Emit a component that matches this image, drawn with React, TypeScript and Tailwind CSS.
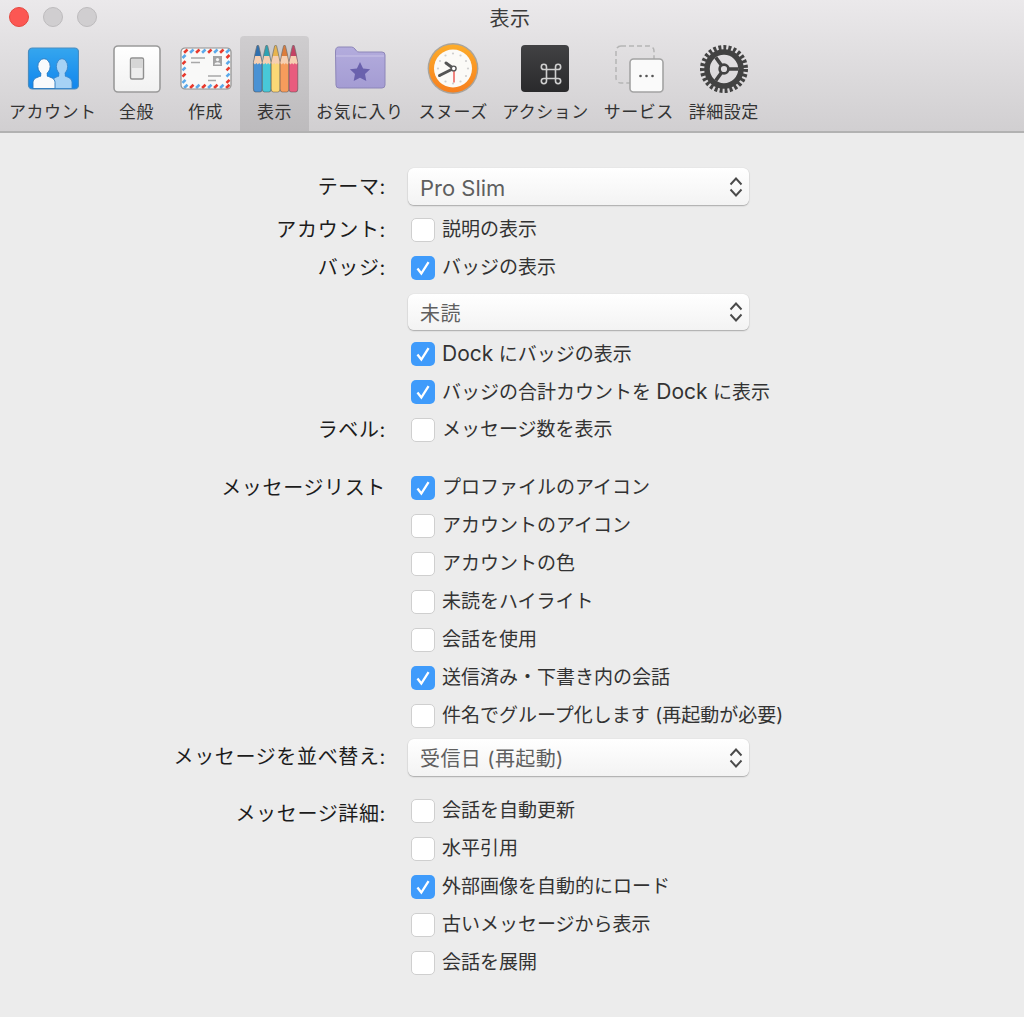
import React from "react";

const FONT = "[font-family:Inter,'Noto_Sans_CJK_JP',sans-serif]";

function AccountIcon() {
  const person = (cx: number, w: number, fill: string, stroke: string) => (
    <g fill={fill} stroke={stroke} strokeWidth="0.9">
      <path d={`M${cx - w} 45.5 v-6 c0-4 ${w * 0.35}-5 ${w - 3}-6.5 v-3 h6 v3 c${w * 0.65 - 3} 1.5 ${w - 3} 2.5 ${w - 3} 6.5 v6 z`} />
      <ellipse cx={cx} cy="23.5" rx={w * 0.56} ry="7.8" />
      <path d={`M${cx - 2.6} 30 h5.2 v3.4 h-5.2 z`} stroke="none" />
    </g>
  );
  return (
    <svg width="52" height="52" viewBox="0 0 52 52">
      <defs>
        <linearGradient id="acc" x1="0" y1="0" x2="0" y2="1">
          <stop offset="0" stopColor="#35a6ee" />
          <stop offset="1" stopColor="#1186ee" />
        </linearGradient>
      </defs>
      <rect x="1.5" y="5" width="50" height="41" rx="4" fill="url(#acc)" stroke="#4a8dbf" strokeWidth="1.2" />
      {person(35, 10, "#a6d2f5", "#3a86c8")}
      {person(17, 11, "#f8fafc", "#2a78bd")}
    </svg>
  );
}

function GeneralIcon() {
  return (
    <svg width="52" height="52" viewBox="0 0 52 52">
      <defs>
        <linearGradient id="gen" x1="0" y1="0" x2="0" y2="1">
          <stop offset="0" stopColor="#ffffff" />
          <stop offset="1" stopColor="#f1f1f1" />
        </linearGradient>
      </defs>
      <rect x="3" y="3" width="46" height="46" rx="4" fill="url(#gen)" stroke="#9a9a9a" strokeWidth="1.6" />
      <rect x="19.5" y="15" width="13" height="21" rx="1.5" fill="#ededed" stroke="#8f8f8f" strokeWidth="1.4" />
      <rect x="20.5" y="16" width="11" height="9" fill="#d6d6d6" />
    </svg>
  );
}

function ComposeIcon() {
  const stripes = [];
  for (let i = 0; i < 8; i++) {
    const x = 3.5 + i * 6;
    const c = i % 2 ? "#5ba9ea" : "#e8392c";
    const c2 = i % 2 ? "#e8392c" : "#5ba9ea";
    stripes.push(<path key={`t${i}`} d={`M${x + 4} 6.5 l-3.4 3.2`} stroke={c} strokeWidth="2.6" />);
    stripes.push(<path key={`b${i}`} d={`M${x + 4} 41.8 l-3.4 3.2`} stroke={c2} strokeWidth="2.6" />);
  }
  for (let i = 0; i < 5; i++) {
    const y = 11 + i * 6.2;
    stripes.push(<path key={`l${i}`} d={`M5.5 ${y + 1} l-3 3`} stroke={i % 2 ? "#e8392c" : "#5ba9ea"} strokeWidth="2.6" />);
    stripes.push(<path key={`r${i}`} d={`M49.5 ${y + 1} l-3 3`} stroke={i % 2 ? "#5ba9ea" : "#e8392c"} strokeWidth="2.6" />);
  }
  return (
    <svg width="52" height="52" viewBox="0 0 52 52">
      <rect x="1" y="5" width="50" height="41" rx="4" fill="#f9f9f8" />
      {stripes}
      <rect x="1" y="5" width="50" height="41" rx="4" fill="none" stroke="#8f8f8f" strokeWidth="1.2" />
      <path d="M11 15 h14 M11 19.5 h9 M28 33 h13 M28 37.5 h8" stroke="#a8a8a8" strokeWidth="1.5" />
      <rect x="33" y="13" width="9" height="10" fill="#a3a3a3" />
      <circle cx="37.5" cy="16.6" r="1.6" fill="#f4f4f4" />
      <path d="M34.5 21.5 c0-3 6-3 6 0 z" fill="#f4f4f4" />
    </svg>
  );
}

function PencilsIcon() {
  const cols = [
    ["#4a92d4", "#2f6fae"],
    ["#48c8d8", "#2ea2b2"],
    ["#fbd876", "#e8b44e"],
    ["#f69c5c", "#dc7c3c"],
    ["#e85c7e", "#c44264"],
  ];
  return (
    <svg width="52" height="52" viewBox="0 0 52 52">
      {cols.map(([c, d], i) => {
        const x = 4.4 + i * 8.9;
        return (
          <g key={i}>
            <path d={`M${x} 20 Q${x + 1.5} 10 ${x + 3.4} 3 q1 -2 2 0 Q${x + 7.3} 10 ${x + 8.8} 20 V46 q0 3 -2 3 h-4.8 q-2 0 -2 -3 Z`} fill={d} stroke="#6e6e6e" strokeWidth="0.7" />
            <path d={`M${x + 0.6} 20 V46 q0 2.4 1.6 2.4 h4.4 q1.6 0 1.6 -2.4 V20 Z`} fill={c} />
            <path d={`M${x + 0.2} 20 L${x + 1.8} 13 h5.2 L${x + 8.6} 20 l-1.4 1.5 l-1.4 -1.5 l-1.4 1.5 l-1.4 -1.5 l-1.4 1.5 Z`} fill="#f6cfb2" />
          </g>
        );
      })}
    </svg>
  );
}

function FolderIcon() {
  return (
    <svg width="52" height="52" viewBox="0 0 52 52">
      <defs>
        <linearGradient id="fol" x1="0" y1="0" x2="0" y2="1">
          <stop offset="0" stopColor="#b3acdd" />
          <stop offset="1" stopColor="#a49cd3" />
        </linearGradient>
      </defs>
      <path d="M1.5 9 q0-5 3-5 h13 q2 0 3.5 2 l1.5 2 q1 1 2.5 1 h23 q3 0 3 3 v30 q0 3-3 3 h-43 q-3 0-3-3 Z" fill="url(#fol)" stroke="#8d86b8" strokeWidth="1" />
      <path d="M2 13 h48" stroke="#c9c4e8" strokeWidth="1.2" />
      <path d="M26 19 l3.1 6.4 7 .9 -5.1 4.8 1.3 7 -6.3-3.4 -6.3 3.4 1.3-7 -5.1-4.8 7-.9 Z" fill="#6a61ad" />
    </svg>
  );
}

function ClockIcon() {
  const dots = [];
  for (let i = 0; i < 12; i++) {
    const a = (i * Math.PI) / 6;
    dots.push(<circle key={i} cx={26 + 15 * Math.cos(a)} cy={25.5 + 15 * Math.sin(a)} r="1.1" fill="#cfcfcf" />);
  }
  return (
    <svg width="52" height="52" viewBox="0 0 52 52">
      <defs>
        <linearGradient id="clk" x1="0" y1="0" x2="0" y2="1">
          <stop offset="0" stopColor="#fdac2a" />
          <stop offset="1" stopColor="#f77f1e" />
        </linearGradient>
      </defs>
      <circle cx="26" cy="25.5" r="25.4" fill="#a9a49c" />
      <circle cx="26" cy="25.5" r="24" fill="url(#clk)" />
      <circle cx="26" cy="25.5" r="19" fill="#fbfaf7" />
      {dots}
      <path d="M26.5 25.5 L19 20" stroke="#555" strokeWidth="3" strokeLinecap="round" />
      <path d="M26.5 25.5 L12.5 32.5" stroke="#555" strokeWidth="3" strokeLinecap="round" />
      <path d="M27 25.5 V39.5" stroke="#e8211c" strokeWidth="1.1" />
      <circle cx="26.7" cy="25.5" r="2.4" fill="#fff" stroke="#555" strokeWidth="1.4" />
    </svg>
  );
}

function ActionIcon() {
  return (
    <svg width="52" height="52" viewBox="0 0 52 52">
      <defs>
        <linearGradient id="act" x1="0" y1="0" x2="0" y2="1">
          <stop offset="0" stopColor="#414143" />
          <stop offset="1" stopColor="#2a2a2c" />
        </linearGradient>
      </defs>
      <rect x="2" y="2" width="48" height="47" rx="4" fill="url(#act)" />
      <g fill="none" stroke="#cfcfcf" strokeWidth="1.6">
        <path d="M27.5 26.5 h9 v9 h-9 Z" />
        <path d="M27.5 26.5 h-2.6 a2.6 2.6 0 1 1 2.6 -2.6 Z M36.5 26.5 v-2.6 a2.6 2.6 0 1 1 2.6 2.6 Z M36.5 35.5 h2.6 a2.6 2.6 0 1 1 -2.6 2.6 Z M27.5 35.5 v2.6 a2.6 2.6 0 1 1 -2.6 -2.6 Z" />
      </g>
    </svg>
  );
}

function ServiceIcon() {
  return (
    <svg width="52" height="52" viewBox="0 0 52 52">
      <rect x="3" y="3" width="38" height="37" rx="5" fill="none" stroke="#b5b5b5" strokeWidth="1.5" strokeDasharray="5 3" />
      <rect x="17" y="16" width="33" height="33" rx="3.5" fill="#fafafa" stroke="#a3a3a3" strokeWidth="1.6" />
      <circle cx="27.5" cy="33" r="1.3" fill="#555" />
      <circle cx="33.5" cy="33" r="1.3" fill="#555" />
      <circle cx="39.5" cy="33" r="1.3" fill="#555" />
    </svg>
  );
}

function GearIcon() {
  const r = 21.5;
  const n = 27;
  const step = (2 * Math.PI * r) / n;
  return (
    <svg width="52" height="52" viewBox="0 0 52 52">
      <g fill="none" stroke="#424242">
        <circle cx="26" cy="26" r={r} strokeWidth="5" strokeDasharray={`${step * 0.58} ${step * 0.42}`} />
        <circle cx="26" cy="26" r="17" strokeWidth="5.6" />
        <path d="M30.5 26 H40 M23.4 22.2 L17.8 14.5 M23.4 29.8 L17.8 37.5" strokeWidth="3.6" />
        <circle cx="26" cy="26" r="4.4" strokeWidth="2.6" />
      </g>
    </svg>
  );
}

const TOOLS: { label: string; icon: React.ReactNode; cls: string }[] = [
  { label: "アカウント", icon: <AccountIcon />, cls: "pl-[7px] pr-[5.5px]" },
  { label: "全般", icon: <GeneralIcon />, cls: "px-[7px]" },
  { label: "作成", icon: <ComposeIcon />, cls: "px-[7px]" },
  { label: "表示", icon: <PencilsIcon />, cls: "px-[7px] bg-gradient-to-b from-[#cfcdcf] to-[#bdbbbd] rounded-t-[4px]" },
  { label: "お気に入り", icon: <FolderIcon />, cls: "pl-[7px] pr-[8px]" },
  { label: "スヌーズ", icon: <ClockIcon />, cls: "pl-[7px] pr-[7.5px]" },
  { label: "アクション", icon: <ActionIcon />, cls: "pl-[7px] pr-[8px]" },
  { label: "サービス", icon: <ServiceIcon />, cls: "pl-[7px] pr-[8px]" },
  { label: "詳細設定", icon: <GearIcon />, cls: "px-[7px]" },
];

function Check({ on, children }: { on?: boolean; children: React.ReactNode }) {
  return (
    <div className="flex items-center h-[38px] ml-[3px] gap-[7px] text-[19px] text-[#333] whitespace-nowrap">
      {on ? (
        <span className="flex items-center justify-center w-[24px] h-[24px] rounded-[5px] bg-[#3f9bfb]">
          <svg width="20" height="20" viewBox="0 0 18 18" fill="none">
            <path d="M4 9.5 L7.5 14 L14 3.8" stroke="#fff" strokeWidth="2.1" />
          </svg>
        </span>
      ) : (
        <span className="w-[24px] h-[24px] rounded-[5px] bg-white border border-[#cfcfcf]" />
      )}
      <span>{children}</span>
    </div>
  );
}

function Select({ children, h = "h-[37px]" }: { children: React.ReactNode; h?: string }) {
  return (
    <div className={`flex items-center justify-between w-[341px] ${h} rounded-[6px] bg-gradient-to-b from-white to-[#f3f3f3] shadow-[0_1px_1.5px_rgba(0,0,0,0.28),0_0_1px_rgba(0,0,0,0.18)] pl-[12px] pr-[5px] text-[20px] tracking-[0.4px] text-[#5f5f5f]`}>
      <span className="pt-[3px]">{children}</span>
      <svg width="16" height="24" viewBox="0 0 16 24" fill="none" stroke="#4a4a4a" strokeWidth="1.9">
        <path d="M2.5 9.5 L8 3.5 L13.5 9.5" />
        <path d="M2.5 14.5 L8 20.5 L13.5 14.5" />
      </svg>
    </div>
  );
}

function Row({ label, className = "", labelClass = "", children }: { label?: string; className?: string; labelClass?: string; children: React.ReactNode }) {
  return (
    <div className={`grid grid-cols-[386px_1fr] gap-x-[22px] ${className}`}>
      <div className={`h-[38px] flex items-center justify-end text-[20px] tracking-[0.65px] text-[#1c1c1c] whitespace-nowrap ${labelClass}`}>{label}</div>
      <div>{children}</div>
    </div>
  );
}

export default function App() {
  return (
    <div className={`w-[1024px] h-[1017px] overflow-hidden bg-[#ececec] ${FONT}`}>
      <header className="h-[133px] bg-gradient-to-b from-[#ebe9eb] to-[#d1cfd1] border-b-2 border-[#b2b2b2]">
        <div className="h-[36px] grid grid-cols-[1fr_auto_1fr] items-center pr-[4px]">
          <div className="flex items-center gap-[14px] pl-[9px] pb-[2px]">
            <span className="w-[20px] h-[20px] rounded-full bg-[#fc5753] border border-[#e5483f]" />
            <span className="w-[20px] h-[20px] rounded-full bg-[#d0ced0] border border-[#bdbbbd]" />
            <span className="w-[20px] h-[20px] rounded-full bg-[#d0ced0] border border-[#bdbbbd]" />
          </div>
          <div className="text-[20px] tracking-[0.5px] text-[#3a3a3a] pt-[2px]">表示</div>
          <div />
        </div>
        <nav className="flex pl-[2px] h-[95px]">
          {TOOLS.map((t) => (
            <div key={t.label} className={`flex flex-col items-center min-w-[69px] ${t.cls}`}>
              <div className="h-[65px] pt-[7px] shrink-0">{t.icon}</div>
              <div className="text-[17px] tracking-[0.5px] leading-[22px] text-[#333] whitespace-nowrap">{t.label}</div>
            </div>
          ))}
        </nav>
      </header>
      <main className="pt-[35px]">
        <Row label="テーマ:" labelClass="pb-[1px]"><Select><span className="text-[22px] tracking-normal">Pro Slim</span></Select></Row>
        <Row label="アカウント:" className="mt-[5px]"><Check>説明の表示</Check></Row>
        <Row label="バッジ:"><Check on>バッジの表示</Check></Row>
        <Row className="mt-[7px] h-[36px]"><Select h="h-[36px]">未読</Select></Row>
        <Row className="mt-[5px]"><Check on><span className="text-[21px]">Dock</span> にバッジの表示</Check></Row>
        <Row><Check on>バッジの合計カウントを <span className="text-[21px]">Dock</span> に表示</Check></Row>
        <Row label="ラベル:"><Check>メッセージ数を表示</Check></Row>
        <Row label="メッセージリスト" className="mt-[20px]">
          <Check on>プロファイルのアイコン</Check>
          <Check>アカウントのアイコン</Check>
          <Check>アカウントの色</Check>
          <Check>未読をハイライト</Check>
          <Check>会話を使用</Check>
          <Check on>送信済み・下書き内の会話</Check>
          <Check>件名でグループ化します (再起動が必要)</Check>
        </Row>
        <Row label="メッセージを並べ替え:" labelClass="pb-[3px]" className="mt-[4px]"><Select>受信日 (再起動)</Select></Row>
        <Row label="メッセージ詳細:" labelClass="pt-[5px]" className="mt-[15px]">
          <Check>会話を自動更新</Check>
          <Check>水平引用</Check>
          <Check on>外部画像を自動的にロード</Check>
          <Check>古いメッセージから表示</Check>
          <Check>会話を展開</Check>
        </Row>
      </main>
    </div>
  );
}
